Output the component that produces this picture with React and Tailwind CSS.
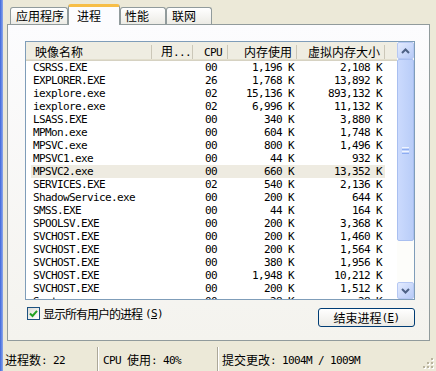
import React from "react";

const mono = "font-['DejaVu_Sans_Mono','Liberation_Mono',monospace] text-[11px] tracking-[-0.62px]";
const cjk = "font-['Noto_Sans_CJK_SC','Noto_Sans',sans-serif] text-[12px]";

const tabs = [
  { label: "应用程序", cls: "w-[58px] pl-[5px]" },
  { label: "进程", cls: "w-[52px] pl-[8px]", active: true },
  { label: "性能", cls: "w-[46px] pl-[4px]" },
  { label: "联网", cls: "w-[46px] pl-[5px]" },
];

const processes = [
  ["CSRSS.EXE", "00", "1,196 K", "2,108 K"],
  ["EXPLORER.EXE", "26", "1,768 K", "13,892 K"],
  ["iexplore.exe", "02", "15,136 K", "893,132 K"],
  ["iexplore.exe", "02", "6,996 K", "11,132 K"],
  ["LSASS.EXE", "00", "340 K", "3,880 K"],
  ["MPMon.exe", "00", "604 K", "1,748 K"],
  ["MPSVC.exe", "00", "800 K", "1,496 K"],
  ["MPSVC1.exe", "00", "44 K", "932 K"],
  ["MPSVC2.exe", "00", "660 K", "13,352 K"],
  ["SERVICES.EXE", "02", "540 K", "2,136 K"],
  ["ShadowService.exe", "00", "200 K", "644 K"],
  ["SMSS.EXE", "00", "44 K", "164 K"],
  ["SPOOLSV.EXE", "00", "200 K", "3,368 K"],
  ["SVCHOST.EXE", "00", "200 K", "1,460 K"],
  ["SVCHOST.EXE", "00", "200 K", "1,564 K"],
  ["SVCHOST.EXE", "00", "380 K", "1,956 K"],
  ["SVCHOST.EXE", "00", "1,948 K", "10,212 K"],
  ["SVCHOST.EXE", "00", "200 K", "1,512 K"],
  ["System", "00", "28 K", "28 K"],
];

function Tab({ tab }) {
  if (tab.active) {
    return (
      <div className={`${tab.cls} h-[21px] flex items-center pb-[1px] bg-[#FCFCFE] border-x border-[#919B9C] border-t-[3px] border-t-[#F7BE47] rounded-t-[3px]`}>
        {tab.label}
      </div>
    );
  }
  return (
    <div className={`${tab.cls} h-[17px] mb-px flex items-center border border-b-0 border-[#919B9C] rounded-t-[3px] bg-linear-to-b from-white to-[#ECEBE5]`}>
      {tab.label}
    </div>
  );
}

function HeaderCell({ cls, align, children }) {
  return (
    <div className={`${cls} h-full flex items-center`}>
      <span className={align === "right" ? "flex-1 text-right pr-[4px]" : "flex-1"}>{children}</span>
      <span className="w-px h-[14px] bg-[#CBC7B8]" />
    </div>
  );
}

function Chevron({ up }) {
  return (
    <svg width="9" height="6" viewBox="0 0 9 6">
      <path d={up ? "M1 5L4.5 1.5L8 5" : "M1 1L4.5 4.5L8 1"} stroke="#4D6185" strokeWidth="2" fill="none" />
    </svg>
  );
}

function ScrollBar() {
  return (
    <div className="w-[17px] flex flex-col bg-[#FDFDFA]">
      <div className="h-[17px] rounded-[2px] border border-[#B6C8F3] bg-linear-to-br from-[#E3EBFE] to-[#B7CAF7] flex items-center justify-center">
        <Chevron up />
      </div>
      {/* thumb */}
      <div className="h-[182px] rounded-[2px] border border-[#A9BFF0] bg-linear-to-r from-[#CBDAFD] to-[#B9CDF8] flex flex-col items-center justify-center gap-px">
        <span className="w-[7px] h-px bg-[#EEF4FE]" />
        <span className="w-[7px] h-px bg-[#8EADF2]" />
        <span className="w-[7px] h-px bg-[#EEF4FE]" />
        <span className="w-[7px] h-px bg-[#8EADF2]" />
      </div>
      <div className="flex-1" />
      <div className="h-[17px] rounded-[2px] border border-[#B6C8F3] bg-linear-to-br from-[#E3EBFE] to-[#B7CAF7] flex items-center justify-center">
        <Chevron />
      </div>
    </div>
  );
}

function ProcessList() {
  return (
    <div className="w-[390px] h-[259px] border border-[#7F9DB9] bg-white flex">
      <div className="w-[371px] flex flex-col">
        {/* column headers */}
        <div className="h-[19px] flex bg-[#EFEDE2] shadow-[inset_0_-1px_0_#D6D2C2,inset_0_-2px_0_#E2DECD] leading-none">
          <HeaderCell cls="w-[126px] pl-[9px]">映像名称</HeaderCell>
          <HeaderCell cls="w-[41px] pl-[9px]">
            用<span className={mono}>...</span>
          </HeaderCell>
          <HeaderCell cls="w-[35px] pl-[11px]">
            <span className={mono}>CPU</span>
          </HeaderCell>
          <HeaderCell cls="w-[69px]" align="right">内存使用</HeaderCell>
          <HeaderCell cls="w-[88px]" align="right">虚拟内存大小</HeaderCell>
        </div>
        {/* rows */}
        <div className={`h-[238px] overflow-hidden pl-[5px] ${mono} leading-[13px]`}>
          {processes.map((p, i) => (
            <div key={i} className={`w-[354px] h-[13px] flex items-center whitespace-pre ${i === 8 ? "bg-[#EEEBE1]" : ""}`}>
              <span className="w-[121px] pl-[2px]">{p[0]}</span>
              <span className="w-[41px]" />
              <span className="w-[35px] pl-[12px]">{p[1]}</span>
              <span className="w-[69px] text-right pr-[3px]">{p[2]}</span>
              <span className="w-[88px] text-right pr-[3px]">{p[3]}</span>
            </div>
          ))}
        </div>
      </div>
      <ScrollBar />
    </div>
  );
}

function StatusBar() {
  return (
    <div className="flex-1 pt-[6px] flex">
      <div className="flex-1 flex items-center leading-none">
        <div className="w-[94px] h-full flex items-center pl-[2px] pt-[2px]">
          进程数<span className={mono}>: 22</span>
        </div>
        <span className="w-px h-full bg-[#ACA899]" />
        <span className="w-px h-full bg-white" />
        <div className="w-[118px] h-full flex items-center pl-[4px] pt-[2px] whitespace-pre">
          <span className={mono}>CPU </span>使用<span className={mono}>: 40%</span>
        </div>
        <span className="w-px h-full bg-[#ACA899]" />
        <span className="w-px h-full bg-white" />
        <div className="flex-1 h-full flex items-center pl-[3px] pt-[2px] whitespace-pre">
          提交更改<span className={mono}>: 1004M / 1009M</span>
        </div>
        {/* size grip */}
        <svg className="self-end mr-[2px] mb-[2px]" width="11" height="11" viewBox="0 0 11 11">
          {[[9, 1], [9, 5], [5, 5], [9, 9], [5, 9], [1, 9]].map(([x, y], i) => (
            <g key={i}>
              <rect x={x} y={y} width="2" height="2" fill="#FFFFFF" />
              <rect x={x - 1} y={y - 1} width="2" height="2" fill="#B9B49E" />
            </g>
          ))}
        </svg>
      </div>
    </div>
  );
}

export default function App() {
  return (
    <div className={`w-[436px] h-[371px] flex bg-[#ECE9D8] overflow-hidden text-black ${cjk}`}>
      {/* window frame edge */}
      <div className="w-[3px] bg-linear-to-r from-[#3F66DA] to-[#8FA8EC]" />

      <div className="flex-1 flex flex-col">
        <div className="pl-[4px] pt-[4px]">
          <div className="flex items-end h-[21px] -mb-px ml-[3px] relative z-10 leading-none">
            {tabs.map((t) => (
              <Tab key={t.label} tab={t} />
            ))}
          </div>

          <div className="w-[423px] h-[317px] border border-[#919B9C] bg-linear-to-b from-[#FCFCFE] to-[#F4F3EE] pl-[17px] pt-[16px]">
            <ProcessList />

            <div className="w-[390px] mt-[7px] flex items-start justify-between leading-[13px]">
              <div className="flex items-center ml-[2px]">
                <div className="w-[13px] h-[13px] border border-[#1C5180] bg-linear-to-br from-[#DCDCD7] to-white flex items-center justify-center">
                  <svg width="9" height="9" viewBox="0 0 9 9">
                    <path d="M1 4.5L3.5 7L8 1.8" stroke="#21A121" strokeWidth="2" fill="none" />
                  </svg>
                </div>
                <span className="ml-[3px] tracking-[-1px]">显示所有用户的进程</span>
                <span className={`${mono} ml-[3px]`}>
                  (<span className="underline">S</span>)
                </span>
              </div>
              <div className="mt-px w-[97px] h-[19px] rounded-[3px] border border-[#003C74] bg-linear-to-b from-white to-[#ECEBE6] flex items-center justify-center leading-none">
                结束进程<span className={mono}>(<span className="underline">E</span>)</span>
              </div>
            </div>
          </div>
        </div>

        <StatusBar />
      </div>
    </div>
  );
}
